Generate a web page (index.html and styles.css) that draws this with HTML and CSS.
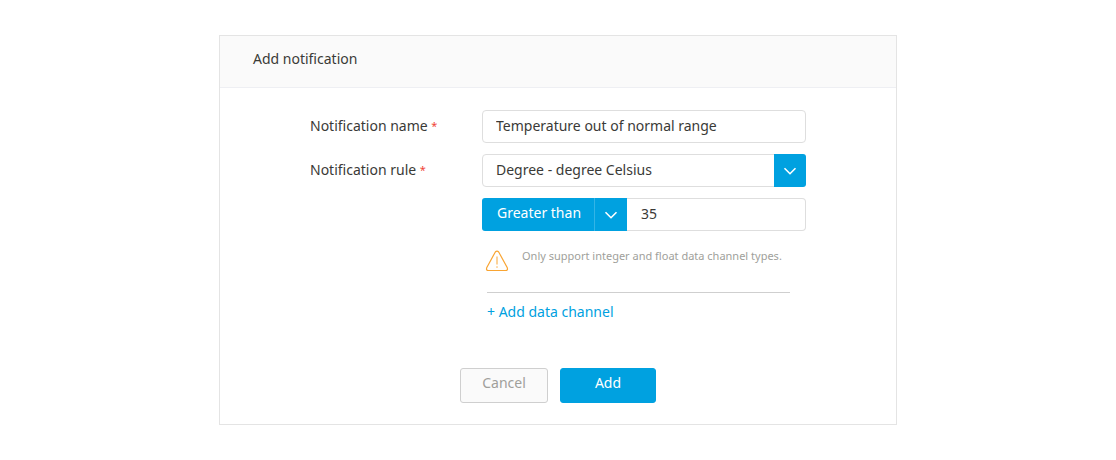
FILE: index.html
```html
<!DOCTYPE html>
<html lang="en">
<head>
<meta charset="utf-8">
<meta name="viewport" content="width=device-width, initial-scale=1">
<title>Add notification</title>
<link rel="stylesheet" href="styles.css">
</head>
<body>
<main class="card">
  <header class="card-header"><h1 class="card-title">Add notification</h1></header>
  <form class="form">
    <div class="fields">
      <label class="label" for="name">Notification name <span class="required">*</span></label>
      <input class="control control-name" id="name" type="text" value="Temperature out of normal range" required>

      <label class="label" for="channel">Notification rule <span class="required">*</span></label>
      <div class="picker">
        <select class="control picker-select" id="channel"><option>Degree - degree Celsius</option></select>
        <span class="arrow arrow-end"><svg width="14" height="8" viewBox="0 0 14 8" aria-hidden="true"><path d="M1.500 1.2 7 6.7 12.500 1.2"/></svg></span>
      </div>

      <div class="condition">
        <div class="picker">
          <select class="operator" aria-label="Condition"><option>Greater than</option></select>
          <span class="arrow arrow-split"><svg width="14" height="8" viewBox="0 0 14 8" aria-hidden="true"><path d="M1.500 1.2 7 6.7 12.500 1.2"/></svg></span>
        </div>
        <input class="control threshold" type="text" value="35" aria-label="Threshold">
      </div>

      <div class="extras">
        <div class="hint">
          <svg class="hint-icon" width="24" height="22" viewBox="0 0 24 22" aria-hidden="true"><path d="M10.300 2Q12 .2 13.700 2L22.300 17.800Q23.100 20.500 20.600 20.500H3.400Q.9 20.500 1.700 17.800Z"/><path class="mark" d="M12 6.500v8M12 16.300v1.500"/></svg>
          <p class="hint-text">Only support integer and float data channel types.</p>
        </div>
        <div class="add-row"><button class="add-channel" type="button">+ Add data channel</button></div>
      </div>
    </div>
    <div class="actions">
      <button class="button button-cancel" type="button">Cancel</button>
      <button class="button button-primary" type="submit">Add</button>
    </div>
  </form>
</main>
</body>
</html>
```

FILE: styles.css
```css
* { box-sizing: border-box; }

body {
  margin: 0;
  padding: 35px 16px;
  background: #fff;
  color: #3a3a37;
  font: 14px/20px "Noto Sans", sans-serif;
}

button, input, select { font: inherit; color: inherit; margin: 0; }

.card {
  max-width: 678px;
  margin: 0 auto;
  border: 1px solid #e4e4e4;
}

.card-header {
  padding: 13px 33px 18px;
  border-bottom: 1px solid #eeeff3;
  background: #fafafa;
}

.card-title { margin: 0; font-size: 14px; font-weight: 400; }

.form { padding: 22px 90px 21px; }

.fields {
  display: grid;
  grid-template-columns: 172px minmax(0, 324px);
  row-gap: 11px;
}

.label { padding-top: 6px; }
.required { color: #f04438; font-size: 11px; line-height: 1; vertical-align: 1px; }

.control {
  width: 100%;
  height: 33px;
  padding: 0 13px 2px;
  border: 1px solid #dedede;
  border-radius: 4px;
  background: #fff;
}

.control-name { padding-bottom: 3px; }

.picker { position: relative; }

.picker-select, .operator { display: block; appearance: none; }

.arrow {
  position: absolute;
  top: 0;
  right: 0;
  display: flex;
  align-items: center;
  justify-content: center;
  height: 33px;
  background: #00a1e0;
  pointer-events: none;
}

.arrow svg { fill: none; stroke: #fff; stroke-width: 1.6; }
.arrow-end { width: 32px; border-radius: 0 3px 3px 0; }
.arrow-split { width: 33px; border-left: 1px solid #33b4e6; }

.condition {
  grid-column: 2;
  display: grid;
  grid-template-columns: 145px minmax(0, 1fr);
}

.operator {
  width: 100%;
  height: 33px;
  padding: 0 33px 3px 15px;
  border: 0;
  border-radius: 3px 0 0 3px;
  background: #00a1e0;
  color: #fff;
}

.threshold { padding-left: 14px; border-left: 0; border-radius: 0 4px 4px 0; }

.extras { grid-column: 2; padding: 4px 16px 0 3px; }

.hint { display: flex; gap: 13px; }
.hint-icon { flex: none; margin-top: 4px; fill: none; stroke: #f9a533; stroke-width: 1.2; }
.mark { stroke-width: 1; }
.hint-text { margin: 0; color: #a09f9b; font-size: 11px; }

.add-row {
  margin: 20px 0 0 2px;
  padding-top: 9px;
  border-top: 1px solid #cfcfcf;
}

.add-channel {
  display: block;
  padding: 0;
  border: 0;
  background: none;
  color: #00a1e0;
}

.actions {
  display: flex;
  justify-content: center;
  gap: 12px;
  margin-top: 46px;
}

.button {
  height: 35px;
  padding: 0 0 5px;
  border: 1px solid #cfcfcf;
  border-radius: 3px;
}

.button-cancel { width: 88px; background: #fafafa; color: #a09f9b; }
.button-primary { width: 96px; border-color: #00a1e0; background: #00a1e0; color: #fff; }
```
